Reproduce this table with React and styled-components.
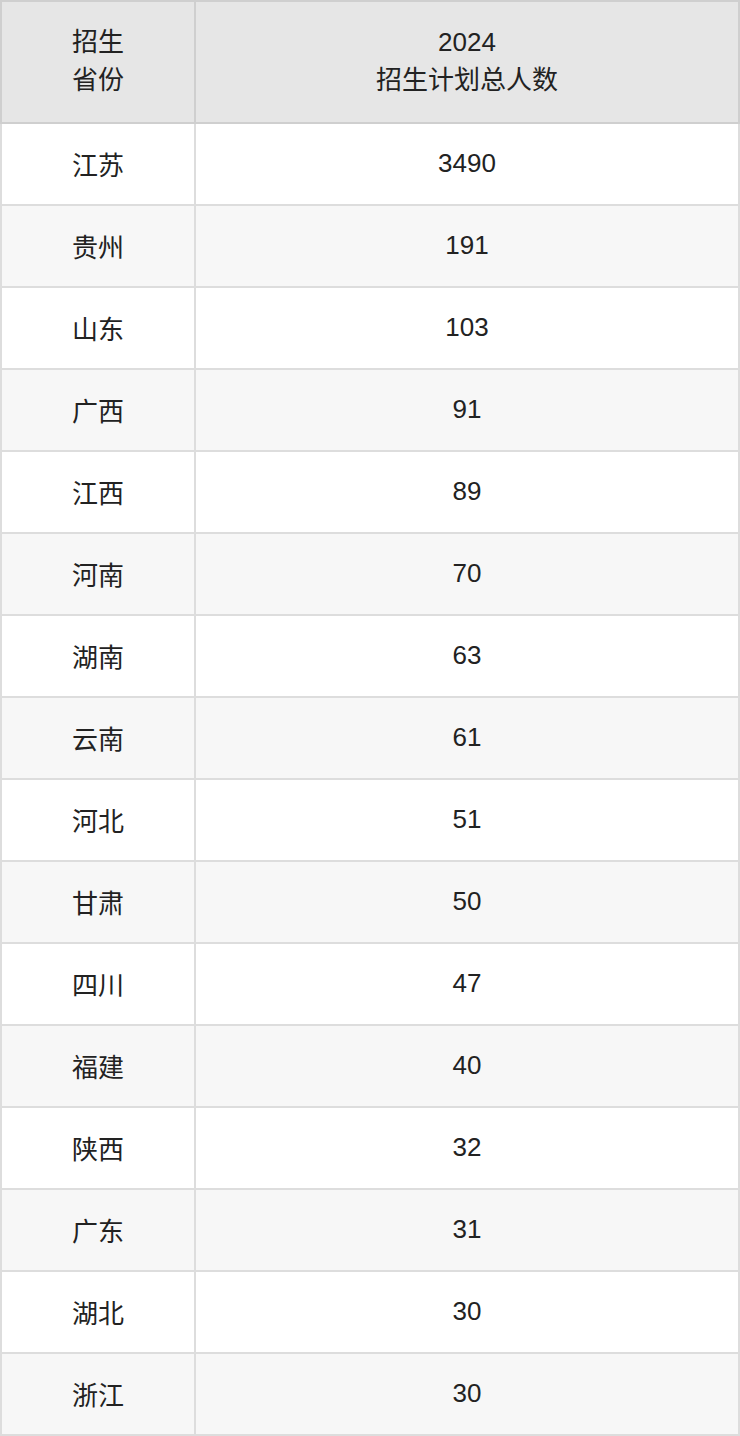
import React from "react";
import styled, { createGlobalStyle } from "styled-components";

const GlobalStyle = createGlobalStyle`
  body {
    margin: 0;
    background: #fff;
    font-family: "Liberation Sans", "Noto Sans CJK SC", sans-serif;
  }
`;

const Table = styled.table`
  width: 740px;
  border-collapse: collapse;
  table-layout: fixed;
  color: #222;
  font-size: 26px;
  text-align: center;
`;

const HeadCell = styled.th`
  height: 117px;
  padding: 0 0 3px;
  font-weight: normal;
  line-height: 38px;
  background: #e6e6e6;
  border: 2px solid #cfcfcf;
  width: ${(p) => p.w || "auto"};
`;

const Row = styled.tr`
  background: ${(p) => (p.even ? "#f7f7f7" : "#fff")};
`;

const Cell = styled.td`
  height: 78px;
  padding: 0 0 2px;
  border: 2px solid #dddddd;
`;

const rows = [
  ["江苏", 3490],
  ["贵州", 191],
  ["山东", 103],
  ["广西", 91],
  ["江西", 89],
  ["河南", 70],
  ["湖南", 63],
  ["云南", 61],
  ["河北", 51],
  ["甘肃", 50],
  ["四川", 47],
  ["福建", 40],
  ["陕西", 32],
  ["广东", 31],
  ["湖北", 30],
  ["浙江", 30],
];

export default function App() {
  return (
    <>
      <GlobalStyle />
      <Table>
        <thead>
          <tr>
            <HeadCell w="192px">
              招生
              <br />
              省份
            </HeadCell>
            <HeadCell>
              2024
              <br />
              招生计划总人数
            </HeadCell>
          </tr>
        </thead>
        <tbody>
          {rows.map(([name, count], i) => (
            <Row key={name} even={i % 2 === 1}>
              <Cell>{name}</Cell>
              <Cell>{count}</Cell>
            </Row>
          ))}
        </tbody>
      </Table>
    </>
  );
}
